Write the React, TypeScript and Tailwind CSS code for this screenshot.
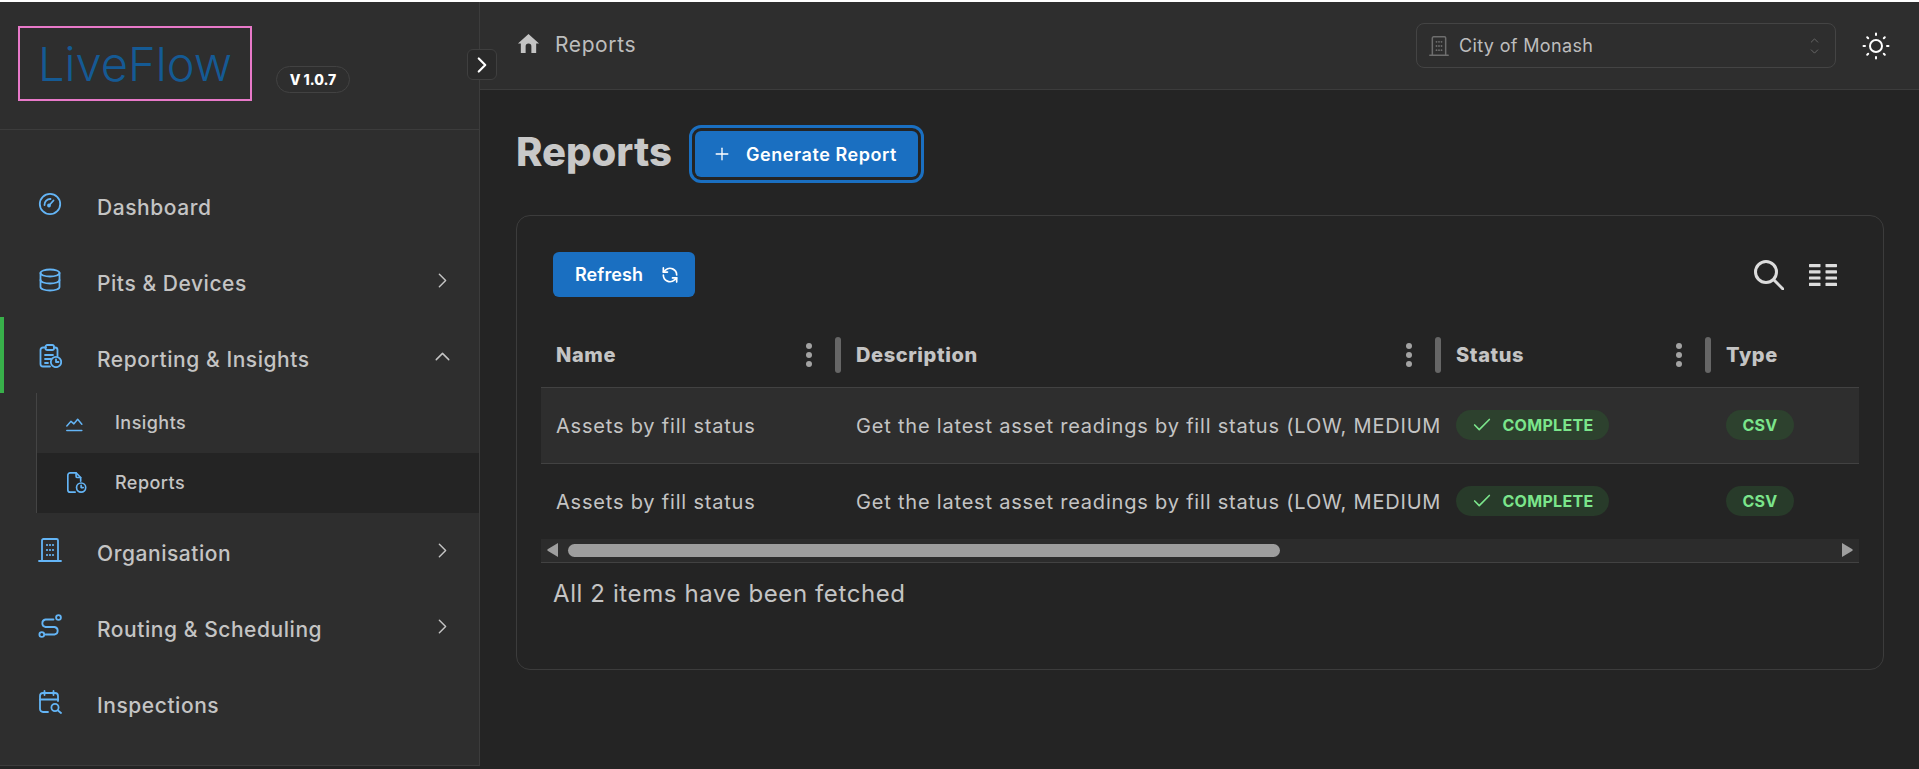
import { Check, ChevronDown, ChevronRight, ChevronUp, Plus } from "lucide-react";
import type { ReactNode } from "react";

const font = { fontFamily: "Inter, 'Noto Sans', sans-serif" };

function Ico({ size = 24, className = "", children }: { size?: number; className?: string; children: ReactNode }) {
  return (
    <svg
      width={size}
      height={size}
      viewBox="0 0 24 24"
      fill="none"
      stroke="currentColor"
      strokeWidth={1.8}
      strokeLinecap="round"
      strokeLinejoin="round"
      className={`shrink-0 ${className}`}
    >
      {children}
    </svg>
  );
}

const GaugeIcon = () => (
  <Ico>
    <circle cx="12" cy="12" r="10.2" />
    <path d="M11 13.5 15.5 8.5" />
    <path d="M6.5 13a5.8 5.8 0 0 1 6-6" />
    <circle cx="11" cy="13.5" r="1" fill="currentColor" />
  </Ico>
);

const DbIcon = () => (
  <Ico>
    <ellipse cx="12" cy="5" rx="9.5" ry="3.5" />
    <path d="M2.5 5v14c0 2 4.3 3.5 9.5 3.5s9.5-1.5 9.5-3.5V5" />
    <path d="M2.5 12c0 2 4.3 3.5 9.5 3.5s9.5-1.5 9.5-3.5" />
  </Ico>
);

const ClipIcon = () => (
  <Ico>
    <path d="M8 3.5H5a2.5 2.5 0 0 0-2.5 2.5v14A2.5 2.5 0 0 0 5 22.5h7" />
    <path d="M16 3.5h1A2.5 2.5 0 0 1 19.5 6v6" />
    <rect x="7.5" y="1" width="8.5" height="5" rx="1.8" />
    <path d="M7 11h8M7 15h6M7 19h3" />
    <circle cx="18" cy="18" r="5.2" />
    <path d="M18 15.5V18h2.5" />
  </Ico>
);

const BuildingIcon = ({ size = 24 }: { size?: number }) => (
  <Ico size={size}>
    <path d="M4 23V2.5A1.5 1.5 0 0 1 5.5 1h13A1.5 1.5 0 0 1 20 2.5V23" />
    <path d="M1 23h22" />
    <path d="M9 7h.01M15 7h.01M9 12h.01M15 12h.01M9 17h.01M15 17h.01M12 7h.01M12 12h.01M12 17h.01" strokeWidth={2.2} />
  </Ico>
);

const RouteIcon = () => (
  <Ico>
    <circle cx="3.8" cy="20.5" r="2.4" />
    <circle cx="20.5" cy="3.5" r="2.4" />
    <path d="M7.5 20.5h9a3.8 3.8 0 0 0 0-7.5h-9a3.8 3.8 0 0 1 0-7.5h8" />
  </Ico>
);

const CalendarIcon = () => (
  <Ico>
    <path d="M10 22H5a3 3 0 0 1-3-3V6a3 3 0 0 1 3-3h12a3 3 0 0 1 3 3v5" />
    <path d="M2 9.5h18M6.5 1v4M15.5 1v4" />
    <circle cx="17" cy="17.5" r="3.6" />
    <path d="m20 20.5 3 2.5" />
  </Ico>
);

const ChartIcon = () => (
  <Ico size={20}>
    <path d="M1 21h18" />
    <path d="M1 15.5 6 10l3.5 3L14 7.5l5 6" />
  </Ico>
);

const FileClockIcon = () => (
  <Ico size={22}>
    <path d="M10 22H4.5A2.5 2.5 0 0 1 2 19.5v-16A2.5 2.5 0 0 1 4.5 1H11l5 5v4" />
    <path d="M11 1v3.5A1.5 1.5 0 0 0 12.5 6H16" />
    <circle cx="16.5" cy="17" r="5" />
    <path d="M16.5 14.5V17h2.3" />
  </Ico>
);

const SunIcon = () => (
  <svg width="28" height="28" viewBox="0 0 28 28" fill="none" stroke="#fff" strokeWidth="2" strokeLinecap="round" className="shrink-0">
    <circle cx="14" cy="14" r="6" />
    <path d="M14 1.5v1.5M14 25v1.5M1.5 14H3M25 14h1.5M5.2 5.2l1 1M21.8 21.8l1 1M5.2 22.8l1-1M21.8 6.2l1-1" />
  </svg>
);

function NavItem({ icon, label, open, top }: { icon: ReactNode; label: string; open?: "up" | "right"; top?: boolean }) {
  const chevron = top ? "translate-y-[1px] text-[#c4c4c4]" : "-translate-y-[1px] text-[#c4c4c4]";
  return (
    <div className="flex h-[76px] items-center pl-[38px] pr-[24px] text-[#64b5f6]">
      <div className={`flex w-[59px] ${top ? "translate-y-[1px]" : "-translate-y-[1px]"}`}>{icon}</div>
      <span className={`flex-1 text-[21px] font-medium tracking-[0.55px] text-[#c4c4c4] ${top ? "translate-y-[5px]" : "translate-y-[3px]"}`}>
        {label}
      </span>
      {open === "right" && <ChevronRight size={25} strokeWidth={1.4} className={chevron} />}
      {open === "up" && <ChevronUp size={25} strokeWidth={1.4} className={chevron} />}
    </div>
  );
}

function SubItem({ icon, label, active }: { icon: ReactNode; label: string; active?: boolean }) {
  return (
    <div className={`flex h-[60px] items-center pl-[29px] text-[#64b5f6] ${active ? "bg-[#242424]" : ""}`}>
      <div className="flex w-[49px]">{icon}</div>
      <span className="-translate-y-[1px] text-[18px] font-medium tracking-[0.45px] text-[#c4c4c4]">{label}</span>
    </div>
  );
}

function HeadCell({ label, className }: { label: string; className: string }) {
  return (
    <div className={`flex h-full items-center pl-[15px] ${className}`}>
      <span className="flex-1 text-[20px] font-extrabold tracking-[0.6px] text-[#c4c4c4]">{label}</span>
      <svg width="8" height="26" viewBox="0 0 8 26" fill="#a3a3a3" className="mr-[22px]">
        <circle cx="4" cy="4" r="3" />
        <circle cx="4" cy="13" r="3" />
        <circle cx="4" cy="22" r="3" />
      </svg>
      <div className="h-[36px] w-[6px] rounded-full bg-[#666666]" />
    </div>
  );
}

function Pill({ children, tone }: { children: ReactNode; tone: string }) {
  return (
    <span className={`flex h-[30px] -translate-y-[1px] items-center justify-center rounded-full text-[16px] font-bold tracking-[0.3px] text-[#7be58b] ${tone}`}>
      {children}
    </span>
  );
}

function Row({ hover }: { hover?: boolean }) {
  const tone = hover ? "bg-[#2d412e]" : "bg-[#283b2a]";
  return (
    <div className={`flex items-center text-[20px] tracking-[0.8px] text-[#c4c4c4] ${hover ? "h-[76px] border-b border-[#424242] bg-[#2e2e2e]" : "h-[75px]"}`}>
      <div className="w-[300px] pl-[15px]">Assets by fill status</div>
      <div className="w-[600px] overflow-hidden whitespace-nowrap pl-[15px]">
        Get the latest asset readings by fill status (LOW, MEDIUM, HIGH)
      </div>
      <div className="w-[270px] pl-[15px] tracking-normal">
        <div className="w-[153px]">
          <Pill tone={tone}>
            <Check size={22} strokeWidth={1.8} className="mr-[9px]" />
            COMPLETE
          </Pill>
        </div>
      </div>
      <div className="pl-[15px] tracking-normal">
        <div className="w-[68px]">
          <Pill tone={tone}>CSV</Pill>
        </div>
      </div>
    </div>
  );
}

export default function App() {
  return (
    <div className="flex h-[769px] w-[1919px] overflow-hidden border-t-2 border-white bg-[#242424]" style={font}>
      {/* sidebar */}
      <aside className="relative h-[764px] w-[480px] shrink-0 border-r border-b border-[#3c3c3c] bg-[#2e2e2e]">
        <div className="flex h-[128px] items-start border-b border-[#3c3c3c] pl-[18px] pt-[24px]">
          <div className="flex h-[75px] w-[234px] items-center justify-center border-2 border-[#e879c9]">
            <span className="translate-y-[1px] text-[47px] font-light text-[#155a94]">LiveFlow</span>
          </div>
          <span className="ml-[24px] mt-[40px] flex h-[27px] w-[74px] items-center justify-center rounded-full border border-[#424242] text-[14px] font-extrabold text-white">
            V 1.0.7
          </span>
        </div>
        <button className="absolute left-[467px] top-[47px] z-10 flex h-[31px] w-[30px] items-center justify-center rounded-md border border-[#3f3f3f] bg-[#2a2a2a] text-white">
          <ChevronRight size={26} strokeWidth={2} />
        </button>

        <nav className="pt-[35px]">
          <NavItem icon={<GaugeIcon />} label="Dashboard" top />
          <NavItem icon={<DbIcon />} label="Pits & Devices" open="right" top />
          <div className="relative">
            <div className="absolute left-0 top-0 h-full w-[4px] bg-[#38b04a]" />
            <NavItem icon={<ClipIcon />} label="Reporting & Insights" open="up" top />
          </div>
          <div className="ml-[36px] border-l border-[#444444]">
            <SubItem icon={<ChartIcon />} label="Insights" />
            <SubItem icon={<FileClockIcon />} label="Reports" active />
          </div>
          <NavItem icon={<BuildingIcon />} label="Organisation" open="right" />
          <NavItem icon={<RouteIcon />} label="Routing & Scheduling" open="right" />
          <NavItem icon={<CalendarIcon />} label="Inspections" />
        </nav>
      </aside>

      {/* main */}
      <main className="min-w-0 flex-1">
        <header className="flex h-[88px] items-center border-b border-[#3c3c3c] bg-[#2e2e2e] pl-[37px]">
          <svg width="23" height="23" viewBox="0 0 24 24" fill="#c4c4c4" className="-translate-y-[2px]">
            <path d="M12 2 1 12h3v10h5v-7a3 3 0 0 1 6 0v7h5V12h3z" />
          </svg>
          <span className="ml-[15px] -translate-y-[1px] text-[21px] tracking-[0.6px] text-[#bdbdbd]">Reports</span>
          <div className="ml-auto flex h-[45px] w-[420px] items-center rounded-[8px] border border-[#444444] pl-[12px] pr-[14px]">
            <span className="text-[#6e6e6e]">
              <BuildingIcon size={20} />
            </span>
            <span className="ml-[10px] flex-1 text-[18px] tracking-[0.35px] text-[#bdbdbd]">City of Monash</span>
            <span className="flex flex-col text-[#6e6e6e]">
              <ChevronUp size={13} strokeWidth={1.6} className="-mb-[2px]" />
              <ChevronDown size={13} strokeWidth={1.6} />
            </span>
          </div>
          <div className="ml-[26px] mr-[29px]">
            <SunIcon />
          </div>
        </header>

        <div className="px-[36px] pt-[41px]">
          <div className="flex items-center">
            <h1 className="w-[179px] -translate-y-[2px] text-[40px] font-extrabold leading-[46px] text-[#c8c8c8]">Reports</h1>
            <button className="flex h-[46px] w-[223px] items-center rounded-[6px] bg-[#1a6fc1] pl-[17px] text-[18px] font-semibold tracking-[0.55px] text-white outline-[3px] outline-offset-[3px] outline-[#1a6fc1]">
              <Plus size={20} strokeWidth={1.6} />
              <span className="ml-[14px]">Generate Report</span>
            </button>
          </div>

          <section className="mt-[38px] w-[1368px] rounded-[14px] border border-[#3c3c3c] px-[24px] pb-[58px] pt-[36px]">
            <div className="flex items-center justify-between pl-[12px] pr-[22px]">
              <button className="flex h-[45px] w-[142px] items-center rounded-[6px] bg-[#1a6fc1] pl-[22px] text-[18px] font-semibold tracking-[0.1px] text-white">
                Refresh
                <svg width="20" height="20" viewBox="0 0 24 24" fill="none" stroke="currentColor" strokeWidth="2" strokeLinecap="round" strokeLinejoin="round" className="ml-[17px]">
                  <path d="M20 12a8 8 0 0 0-13.5-5.8L4 8.5" />
                  <path d="M4 3.5v5h5" />
                  <path d="M4 12a8 8 0 0 0 13.5 5.8L20 15.5" />
                  <path d="M20 20.5v-5h-5" />
                </svg>
              </button>
              <div className="flex items-center gap-[25px] text-[#dcdcdc]">
                <svg width="30" height="30" viewBox="0 0 30 30" fill="none" stroke="currentColor" strokeWidth="3" strokeLinecap="round">
                  <circle cx="12" cy="12" r="10.5" />
                  <path d="M20 20l9 9" />
                </svg>
                <svg width="28" height="22" viewBox="0 0 28 22" fill="currentColor">
                  <rect x="0" y="0" width="11.5" height="3.2" rx="0.6" />
                  <rect x="0" y="6.2" width="11.5" height="3.2" rx="0.6" />
                  <rect x="0" y="12.4" width="11.5" height="3.2" rx="0.6" />
                  <rect x="0" y="18.8" width="11.5" height="3.2" rx="0.6" />
                  <rect x="16.5" y="0" width="11.5" height="3.2" rx="0.6" />
                  <rect x="16.5" y="6.2" width="11.5" height="3.2" rx="0.6" />
                  <rect x="16.5" y="12.4" width="11.5" height="3.2" rx="0.6" />
                  <rect x="16.5" y="18.8" width="11.5" height="3.2" rx="0.6" />
                </svg>
              </div>
            </div>

            <div className="mt-[26px] overflow-hidden">
              <div className="flex h-[65px] items-center border-b border-[#424242] pb-[1px]">
                <HeadCell label="Name" className="w-[300px]" />
                <HeadCell label="Description" className="w-[600px]" />
                <HeadCell label="Status" className="w-[270px]" />
                <div className="pl-[15px] text-[20px] font-extrabold tracking-[0.6px] text-[#c4c4c4]">Type</div>
              </div>
              <Row hover />
              <Row />
              <div className="flex h-[24px] items-center border-b border-[#424242] bg-[#2c2c2c] px-[6px] pb-[1px]">
                <svg width="11" height="14" viewBox="0 0 11 14" fill="#9e9e9e">
                  <path d="M11 0v14L1 8a1.2 1.2 0 0 1 0-2z" />
                </svg>
                <div className="ml-[10px] h-[13px] w-[712px] rounded-full bg-[#9e9e9e]" />
                <svg width="11" height="14" viewBox="0 0 11 14" fill="#9e9e9e" className="ml-auto">
                  <path d="M0 0v14l10-6a1.2 1.2 0 0 0 0-2z" />
                </svg>
              </div>
            </div>

            <p className="mt-[13px] -mb-[1px] pl-[12px] text-[24px] leading-[36px] tracking-[0.6px] text-[#c4c4c4]">All 2 items have been fetched</p>
          </section>
        </div>
      </main>
    </div>
  );
}
